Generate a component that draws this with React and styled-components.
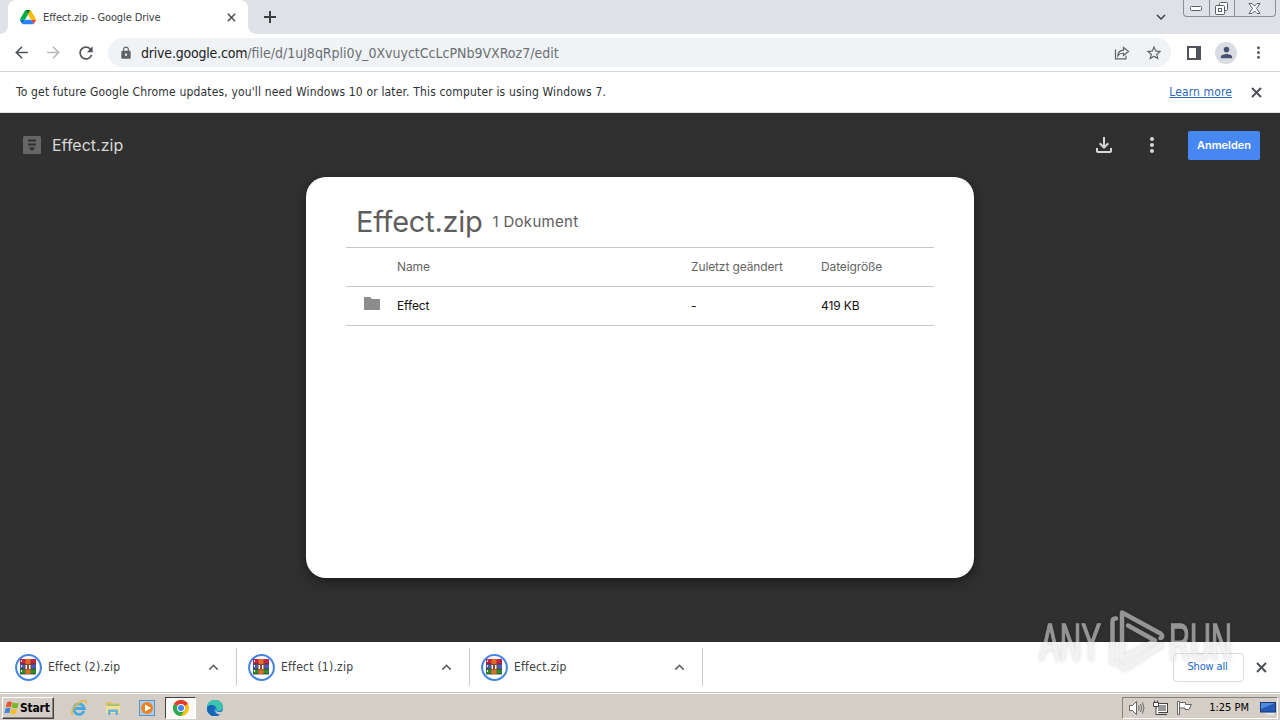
import React from "react";
import styled, { createGlobalStyle } from "styled-components";
import {
  MdArrowBack,
  MdArrowForward,
  MdRefresh,
  MdLock,
  MdStarBorder,
  MdMoreVert,
  MdPerson,
  MdKeyboardArrowUp,
  MdKeyboardArrowDown,
  MdOutlineFileDownload,
} from "react-icons/md";

const downloads = ["Effect (2).zip", "Effect (1).zip", "Effect.zip"];

const CloseIcon = ({ size = 11 }) => (
  <svg width={size} height={size} viewBox="0 0 11 11">
    <path d="M1 1l9 9M10 1l-9 9" stroke="#4b4f54" strokeWidth="1.9" />
  </svg>
);

const PlusIcon = () => (
  <svg width="12" height="12" viewBox="0 0 12 12">
    <path d="M6 0v12M0 6h12" stroke="#3c4043" strokeWidth="2" />
  </svg>
);

const DriveLogo = () => (
  <svg width="16" height="16" viewBox="0 0 87.3 87.3">
    <path d="M6.6 71.9l3.85 6.65c.8 1.4 1.95 2.5 3.3 3.3l13.75-23.8H0c0 1.55.4 3.1 1.2 4.5z" fill="#0066da" />
    <path d="M43.65 30L29.9 6.2c-1.35.8-2.5 1.9-3.3 3.3L1.2 53.5A9 9 0 0 0 0 58h27.5z" fill="#00ac47" />
    <path d="M73.55 81.8c1.35-.8 2.5-1.9 3.3-3.3l1.6-2.75L86.1 62.5c.8-1.4 1.2-2.95 1.2-4.5H59.8l5.85 11.5z" fill="#ea4335" />
    <path d="M43.65 30L57.4 6.2C56.05 5.4 54.5 5 52.9 5H34.4c-1.6 0-3.15.45-4.5 1.2z" fill="#00832d" />
    <path d="M59.8 58H27.5L13.75 81.8c1.35.8 2.9 1.2 4.5 1.2h50.8c1.6 0 3.15-.45 4.5-1.2z" fill="#2684fc" />
    <path d="M73.4 31.5L60.7 9.5c-.8-1.4-1.95-2.5-3.3-3.3L43.65 30 59.8 58h27.45c0-1.55-.4-3.1-1.2-4.5z" fill="#ffba00" />
  </svg>
);

const WinRarIcon = () => (
  <svg width="27" height="27" viewBox="0 0 27 27">
    <circle cx="13.5" cy="13.5" r="12.4" fill="#fff" stroke="#4484e0" strokeWidth="2" />
    <rect x="5" y="5" width="16" height="5" fill="#c02545" />
    <rect x="5" y="10" width="16" height="5" fill="#4a5cc0" />
    <rect x="5" y="15" width="16" height="5" fill="#2f8a2c" />
    <path d="M5 10h16M5 15h16M5 20h16" stroke="#333" strokeWidth=".8" />
    <rect x="10.5" y="5" width="5" height="15" fill="#dd6a28" />
    <rect x="9.500" y="10" width="7" height="5.500" fill="#80452f" />
    <path d="M11.300 15v-4M14.700 15v-4" stroke="#fff" strokeWidth="1.500" />
    <path d="M6.500 6v2M6.500 11v2M6.500 16v2" stroke="#f5dfe3" />
  </svg>
);

const ShareIcon = () => (
  <svg width="16" height="16" viewBox="0 0 16 16" fill="none" stroke="#5f6368" strokeWidth="1.2">
    <path d="M1.5 4.500v9.300h10.500v-3" />
    <path d="M9.500 2.500l5 4-5 4V8.300C6.800 8 5.200 8.800 3.800 10.800c.2-3.400 2-5.500 5.700-5.700z" />
  </svg>
);

const ZipIcon = () => (
  <svg width="18" height="18" viewBox="0 0 18 18">
    <rect width="18" height="18" rx="1.500" fill="#666" />
    <path d="M5 4.500h8M5 8.500h8" stroke="#303030" strokeWidth="2" />
    <path d="M5.500 11.500h7L9 15z" fill="#303030" />
  </svg>
);

const FolderIcon = () => (
  <svg width="16" height="13" viewBox="0 0 16 13">
    <path d="M0 .5q0-.5.5-.5H6l2 2h7.500q.5 0 .5.5v10q0 .5-.5.5H.5q-.5 0-.5-.5z" fill="#8c8c8c" />
  </svg>
);

const WindowsLogo = () => (
  <svg width="16" height="16" viewBox="0 0 16 16">
    <path d="M3 2.500C5 1.300 6.600 1.400 8 2.200L6.800 7.200C5.400 6.500 3.800 6.500 1.800 7.500z" fill="#e5562a" />
    <path d="M8.800 2.600c1.700.9 3.600 1 6 .1l-1.400 5c-2 .9-4 .7-5.800-.2z" fill="#76b72f" />
    <path d="M1.500 8.500c2-1 3.600-.9 5-.2l-1.200 5C3.900 12.500 2.300 12.600.3 13.500z" fill="#3d86d8" />
    <path d="M7.300 8.700c1.700.9 3.600 1 5.800.1l-1.300 5c-2 .9-4 .7-5.800-.2z" fill="#f6bd2b" />
  </svg>
);

const IeIcon = () => (
  <svg width="18" height="18" viewBox="0 0 18 18" fill="none">
    <path d="M14 12A5.300 5.300 0 1 1 14.300 9.500H5" stroke="#48a9e2" strokeWidth="2.800" />
    <path d="M2.800 16C-.5 14.500 4 7 9.500 3.500 14 .6 17 1 16 4.500" stroke="#e6b93f" strokeWidth="1.500" />
  </svg>
);

const ExplorerIcon = () => (
  <svg width="18" height="18" viewBox="0 0 18 18">
    <path d="M2 3h5l1 1.500h8V14H2z" fill="#dfbf60" />
    <path d="M4 5.500h11V9H4z" fill="#8fc67f" />
    <path d="M2 7h14v7H2z" fill="#f3e096" />
    <path d="M4 16v-5.500h10V16h-2.500v-3h-5v3z" fill="#63b3dd" />
  </svg>
);

const PlayerIcon = () => (
  <svg width="16" height="16" viewBox="0 0 16 16">
    <rect x=".5" y=".5" width="15" height="15" fill="#a9cdee" stroke="#5c93c8" />
    <circle cx="8" cy="8" r="6" fill="#ef8220" />
    <path d="M6 4.500v7L12 8z" fill="#fff" />
  </svg>
);

const ChromeIcon = () => (
  <svg width="16" height="16" viewBox="0 0 16 16">
    <circle cx="8" cy="8" r="8" fill="#fbc116" />
    <path d="M8 8L1.070 4A8 8 0 0 1 14.930 4z" fill="#e33b2e" />
    <path d="M1.070 4A8 8 0 0 0 8 16L11.500 10 8 8z" fill="#2da94f" />
    <circle cx="8" cy="8" r="4" fill="#fff" />
    <circle cx="8" cy="8" r="3" fill="#4285f4" />
  </svg>
);

const EdgeIcon = () => (
  <svg width="16" height="16" viewBox="0 0 16 16">
    <circle cx="8" cy="8" r="8" fill="#1b78c9" />
    <path d="M0 7C.5 2.500 4 0 8 0c5 0 8 3.500 8 7 0 2.500-2 4-4.500 4-2 0-2.500-1-2-2C10 6 5 3.500 0 7z" fill="#3cc3b0" />
    <path d="M0 7c4-3.500 8-1.500 8 .5C5.500 8 5 12 9 14c2 1 4 .5 5.500-1A8 8 0 0 1 0 7z" fill="#1666b8" />
    <path d="M8.500 7.500c-1 2.500 1 4.500 4 4.500 1.500 0 2.500-.3 3.500-1v3l-2 .5c-4 .5-7-3-5.500-7z" fill="#d5cec6" />
  </svg>
);

const SpeakerIcon = () => (
  <svg width="17" height="16" viewBox="0 0 17 16" fill="none" stroke="#666">
    <path d="M1.500 5.500h3l4-4v13l-4-4h-3z" fill="#fff" />
    <path d="M10.500 5.500q1.500 2.500 0 5M12.500 4q2.500 4 0 8M14.500 2.500q3 5.500 0 11" />
  </svg>
);

const NetworkIcon = () => (
  <svg width="17" height="16" viewBox="0 0 17 16" fill="none" stroke="#444">
    <rect x="4.500" y="3.500" width="11" height="9" fill="#999" />
    <rect x="5.500" y="4.500" width="9" height="7" stroke="#fff" />
    <path d="M7 14.500h8" />
    <path d="M1.500 2.500h5v4h-5zM2.500 .5v2M5.500 .5v2M4 6.500v8h3" fill="#fff" />
  </svg>
);

const FlagIcon = () => (
  <svg width="17" height="16" viewBox="0 0 17 16" fill="#fff" stroke="#666">
    <path d="M1.500 1.500h2v13h-2z" />
    <path d="M3.500 2.500h6v2h6l-2.500 5h-4v-1.500h-5.500z" />
  </svg>
);

const DesktopIcon = () => (
  <svg width="16" height="16" viewBox="0 0 16 16">
    <rect x=".5" y="2.500" width="15" height="9.500" fill="#2459b8" stroke="#173b78" />
    <path d="M1 3h14L1 9z" fill="#4f8ddd" />
    <path d="M6 14h8" stroke="#dfe5ee" strokeWidth="2" />
  </svg>
);

const Watermark = () => (
  <WatermarkSvg width="210" height="76" viewBox="1030 604 210 76">
    <g fontFamily="Liberation Sans Narrow, Liberation Sans, sans-serif" fontSize="51" strokeWidth="1.500">
      <text x="1040" y="660" textLength="61" lengthAdjust="spacingAndGlyphs">ANY</text>
      <text x="1169" y="660" textLength="63" lengthAdjust="spacingAndGlyphs">RUN</text>
    </g>
    <g fill="none" strokeWidth="4.500" strokeLinecap="round" strokeLinejoin="round">
      <path d="M1116 618.500q-3.500-.5-3.500 3v41.500h5" />
      <path d="M1122 658v-45.500l38.500 21q3.500 3 0 4.500" />
      <path d="M1128 625.500l27 15-33 18.500" />
      <path d="M1162 645l-38 24-2-3" />
    </g>
  </WatermarkSvg>
);

const App = () => {
  return (
    <Screen>
      <GlobalStyle />
      <TabStrip>
        <Tab>
          <DriveLogo />
          <TabTitle>Effect.zip - Google Drive</TabTitle>
          <CloseIcon size={9} />
        </Tab>
        <NewTab>
          <PlusIcon />
        </NewTab>
        <MdKeyboardArrowDown size={18} />
        <WindowButtons>
          <WindowButton $width={25}>
            <svg width="12" height="5"><rect x=".5" y=".5" width="11" height="4" rx="1" fill="#fff" stroke="#596069" /></svg>
          </WindowButton>
          <WindowButton $width={25}>
            <svg width="13" height="13" fill="#fff" stroke="#596069">
              <rect x="4.500" y=".5" width="8" height="8" rx="1" />
              <rect x=".5" y="3.500" width="9" height="9" rx="1" />
              <rect x="3.500" y="6.500" width="3" height="3" />
            </svg>
          </WindowButton>
          <WindowButton $width={41}>
            <svg width="13" height="11" fill="#fff" stroke="#596069">
              <path d="M1 .5h3l2.500 2.500L9 .5h3L8.500 5.500l3.500 5H9L6.500 8 4 10.500H1l3.500-5z" />
            </svg>
          </WindowButton>
        </WindowButtons>
      </TabStrip>

      <Toolbar>
        <NavIcon><MdArrowBack size={19} /></NavIcon>
        <NavIcon $muted><MdArrowForward size={19} /></NavIcon>
        <NavIcon><MdRefresh size={20} /></NavIcon>
        <AddressBar>
          <MdLock size={14} />
          <Url>
            <b>drive.google.com</b>
            <span>/file/d/1uJ8qRpli0y_0XvuyctCcLcPNb9VXRoz7/edit</span>
          </Url>
          <ShareIcon />
          <MdStarBorder size={18} />
        </AddressBar>
        <SidePanel />
        <Avatar><MdPerson size={17} /></Avatar>
        <MdMoreVert size={19} />
      </Toolbar>

      <InfoBar>
        <InfoText>
          To get future Google Chrome updates, you'll need Windows 10 or later. This computer is using Windows 7.
        </InfoText>
        <LearnMore>Learn more</LearnMore>
        <CloseIcon />
      </InfoBar>

      <Viewer>
        <ViewerHeader>
          <ZipIcon />
          <FileName>Effect.zip</FileName>
          <MdOutlineFileDownload size={24} />
          <MdMoreVert size={24} />
          <SignIn>Anmelden</SignIn>
        </ViewerHeader>
        <Card>
          <CardHeader>
            <CardTitle>Effect.zip</CardTitle>
            <CardCount>1 Dokument</CardCount>
          </CardHeader>
          <Row $head>
            <i />
            <Cell>Name</Cell>
            <Cell>Zuletzt geändert</Cell>
            <Cell>Dateigröße</Cell>
          </Row>
          <Row>
            <FolderIcon />
            <Cell>Effect</Cell>
            <Cell>-</Cell>
            <Cell>419 KB</Cell>
          </Row>
          <Divider />
        </Card>
      </Viewer>

      <DownloadBar>
        {downloads.map((name) => (
          <Download key={name}>
            <WinRarIcon />
            <DownloadName>{name}</DownloadName>
            <MdKeyboardArrowUp size={19} />
          </Download>
        ))}
        <ShowAll>Show all</ShowAll>
        <CloseIcon />
      </DownloadBar>

      <Taskbar>
        <StartButton>
          <WindowsLogo />
          <span>Start</span>
        </StartButton>
        <TaskItem><IeIcon /></TaskItem>
        <TaskItem><ExplorerIcon /></TaskItem>
        <TaskItem><PlayerIcon /></TaskItem>
        <TaskItem $active><ChromeIcon /></TaskItem>
        <TaskItem><EdgeIcon /></TaskItem>
        <Tray>
          <SpeakerIcon />
          <NetworkIcon />
          <FlagIcon />
          <Clock>1:25 PM</Clock>
          <DesktopIcon />
        </Tray>
      </Taskbar>
      <Watermark />
    </Screen>
  );
};

const GlobalStyle = createGlobalStyle`
  * {
    box-sizing: border-box;
  }
  body {
    margin: 0;
    overflow: hidden;
  }
  svg {
    flex-shrink: 0;
  }
`;

const Screen = styled.div`
  width: 1280px;
  height: 720px;
  position: relative;
  display: flex;
  flex-direction: column;
  overflow: hidden;
  font-family: "DejaVu Sans Condensed", "DejaVu Sans", sans-serif;
  font-stretch: condensed;
  font-size: 12px;
  color: #3c4043;
  white-space: nowrap;
`;

const TabStrip = styled.div`
  height: 34px;
  display: flex;
  align-items: center;
  padding-left: 8px;
  background-color: #dee1e6;
  > svg {
    margin-left: auto;
    margin-right: 13px;
  }
`;

const Tab = styled.div`
  width: 240px;
  height: 34px;
  position: relative;
  display: flex;
  align-items: center;
  padding: 0 12px;
  background-color: #fff;
  border-radius: 8px 8px 0 0;
  /* curved feet on both sides of the tab */
  &::before,
  &::after {
    content: "";
    position: absolute;
    bottom: 0;
    width: 8px;
    height: 8px;
  }
  &::before {
    left: -8px;
    background: radial-gradient(circle at 0 0, transparent 7.5px, #fff 8px);
  }
  &::after {
    right: -8px;
    background: radial-gradient(circle at 100% 0, transparent 7.5px, #fff 8px);
  }
`;

const TabTitle = styled.span`
  flex: 1;
  margin-left: 7px;
  font-size: 11px;
  letter-spacing: -0.11px;
`;

const NewTab = styled.div`
  height: 12px;
  display: flex;
  margin-left: 16px;
`;

const WindowButtons = styled.div`
  height: 17px;
  align-self: flex-start;
  display: flex;
  margin-right: 4px;
  border: 1px solid #8a9097;
  border-top: none;
  border-radius: 0 0 4px 4px;
`;

const WindowButton = styled.div`
  width: ${(props) => props.$width}px;
  display: flex;
  align-items: center;
  justify-content: center;
  padding-right: 1px;
  & + & {
    border-left: 1px solid #8a9097;
  }
`;

const Toolbar = styled.div`
  height: 38px;
  display: flex;
  align-items: center;
  padding-left: 12px;
  color: #5f6368;
  border-bottom: 1px solid #d5d7da;
`;

const NavIcon = styled.div`
  width: 32px;
  height: 20px;
  color: ${(props) => (props.$muted ? "#b8babd" : "#50545a")};
`;

const AddressBar = styled.div`
  width: 1063px;
  height: 29px;
  flex-shrink: 0;
  display: flex;
  align-items: center;
  padding: 0 8px 0 11px;
  gap: 15px;
  background-color: #f0f3f5;
  border-radius: 15px;
`;

const Url = styled.div`
  flex: 1;
  margin-left: -7px;
  font-size: 14px;
  color: #6a6f74;
  b {
    font-weight: 400;
    letter-spacing: -0.2px;
    color: #202124;
  }
`;

const SidePanel = styled.div`
  width: 14px;
  height: 14px;
  margin-left: 16px;
  border: 2px solid #50545a;
  border-right-width: 5px;
`;

const Avatar = styled.div`
  width: 22px;
  height: 22px;
  margin: 0 12px 0 14px;
  display: flex;
  align-items: center;
  justify-content: center;
  background-color: #d9dde3;
  border-radius: 50%;
  color: #48546f;
`;

const InfoBar = styled.div`
  height: 41px;
  display: flex;
  align-items: center;
  padding: 0 18px 0 16px;
  background-color: #fff;
  border-bottom: 1px solid #dfe3e2;
`;

const InfoText = styled.span`
  letter-spacing: 0.16px;
  color: #2f3235;
`;

const LearnMore = styled.a`
  margin-left: auto;
  margin-right: 19px;
  letter-spacing: 0.12px;
  color: #2e68b8;
  text-decoration: underline;
`;

const Viewer = styled.div`
  height: 529px;
  display: flex;
  flex-direction: column;
  background-color: #303030;
  font-family: Inter, Roboto, sans-serif;
`;

const ViewerHeader = styled.div`
  height: 64px;
  display: flex;
  align-items: center;
  padding: 0 20px 0 23px;
  color: #d8d8d8;
  svg + svg {
    margin: 0 24px;
  }
`;

const FileName = styled.span`
  flex: 1;
  margin-left: 11px;
  padding-bottom: 1px;
  font-size: 16px;
`;

const SignIn = styled.button`
  width: 72px;
  height: 29px;
  padding: 0;
  background-color: #4787f3;
  border: none;
  border-radius: 2px;
  color: #fff;
  font: 600 11px Inter, sans-serif;
`;

const Card = styled.div`
  width: 668px;
  height: 401px;
  align-self: center;
  padding: 20px 40px;
  background-color: #fff;
  border-radius: 20px;
  box-shadow: 0 4px 12px rgba(0, 0, 0, 0.45);
`;

const CardHeader = styled.div`
  height: 50px;
  display: flex;
  align-items: center;
  padding: 0 0 2px 10px;
  color: #5e5e5e;
`;

const CardTitle = styled.span`
  font-size: 29px;
  letter-spacing: -0.25px;
`;

const CardCount = styled.span`
  margin-left: 10px;
  font-size: 15px;
  letter-spacing: 0.3px;
`;

const Row = styled.div`
  height: 39px;
  display: grid;
  grid-template-columns: 51px 294px 130px 1fr;
  align-items: center;
  border-top: 1px solid #c7c7c7;
  font-size: 12px;
  color: ${(props) => (props.$head ? "#666" : "#111")};
  svg {
    margin: 0 0 5px 18px;
  }
`;

const Cell = styled.span`
  padding-bottom: 2px;
  letter-spacing: -0.12px;
`;

const Divider = styled.div`
  height: 1px;
  background-color: #c7c7c7;
`;

const DownloadBar = styled.div`
  height: 51px;
  display: flex;
  align-items: center;
  padding-left: 4px;
  padding-right: 13px;
  background-color: #fff;
  border-bottom: 1px solid #bfc0c0;
  color: #5f6368;
`;

const Download = styled.div`
  width: 233px;
  height: 38px;
  display: flex;
  align-items: center;
  padding: 0 13px 0 11px;
  border-right: 1px solid #c9cbce;
`;

const DownloadName = styled.span`
  flex: 1;
  margin-left: 6px;
  padding-bottom: 1px;
  font-size: 12px;
  letter-spacing: 0.25px;
  color: #3c4043;
`;

const ShowAll = styled.button`
  width: 71px;
  height: 29px;
  margin-left: auto;
  margin-right: 12px;
  padding: 0 2px 2px 0;
  background-color: #fff;
  border: 1px solid #dadce0;
  border-radius: 4px;
  font: inherit;
  font-size: 11px;
  letter-spacing: -0.15px;
  color: #2467cb;
`;

const Taskbar = styled.div`
  height: 27px;
  display: flex;
  align-items: center;
  padding: 1px 2px 0;
  border-top: 1px solid #fff;
  background-color: #d5cec6;
`;

const StartButton = styled.div`
  width: 52px;
  height: 22px;
  display: flex;
  align-items: center;
  padding-left: 1px;
  margin-right: 8px;
  border: 1px solid;
  border-color: #fff #404040 #404040 #fff;
  box-shadow: inset -1px -1px 0 #8a8680;
  font-weight: 700;
  letter-spacing: -0.2px;
  color: #000;
`;

const TaskItem = styled.div`
  width: ${(props) => (props.$active ? 31 : 34)}px;
  height: 22px;
  margin: ${(props) => (props.$active ? "0 2px 0 1px" : 0)};
  display: flex;
  align-items: center;
  justify-content: center;
  border: 1px solid;
  border-color: ${(props) => (props.$active ? "#404040 #fff #fff #404040" : "transparent")};
  background-color: ${(props) => (props.$active ? "#fbfaf8" : "transparent")};
`;

const Tray = styled.div`
  width: 156px;
  height: 22px;
  display: flex;
  align-items: center;
  padding: 0 1px 0 5px;
  gap: 7px;
  margin-left: auto;
  border: 1px solid;
  border-color: #85817b #fff #fff #85817b;
`;

const Clock = styled.span`
  margin-left: auto;
  margin-right: 4px;
  padding-bottom: 1px;
  font-size: 11px;
  color: #000;
`;

const WatermarkSvg = styled.svg`
  position: absolute;
  left: 1030px;
  top: 604px;
  opacity: 0.55;
  fill: #e8e8e8;
  stroke: #e8e8e8;
  filter: drop-shadow(0 0 2px rgba(0, 0, 0, 0.3));
  pointer-events: none;
`;

export default App;
